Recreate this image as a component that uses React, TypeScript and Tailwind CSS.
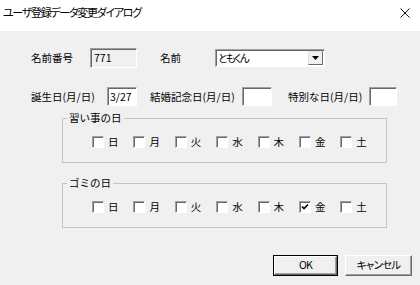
import React from "react";

const days = ["日", "月", "火", "水", "木", "金", "土"];

function Sunken({ className = "", children }: { className?: string; children?: React.ReactNode }) {
  return (
    <div
      className={`flex items-center border border-t-[#a0a0a0] border-l-[#a0a0a0] border-r-white border-b-white shadow-[inset_1px_1px_0_#696969] ${className}`}
    >
      {children}
    </div>
  );
}

function CheckBox({ checked }: { checked?: boolean }) {
  return (
    <span className="flex h-[12px] w-[12px] items-center justify-center border border-t-[#a0a0a0] border-l-[#a0a0a0] border-r-white border-b-white bg-white shadow-[inset_1px_1px_0_#696969]">
      {checked && (
        <svg width="8" height="8" viewBox="0 0 8 8">
          <path d="M1 3.5 L3 5.5 L7 1.5" fill="none" stroke="#000" strokeWidth="1.6" />
        </svg>
      )}
    </span>
  );
}

function DayGroup({ title, checked = [] }: { title: string; checked?: string[] }) {
  return (
    <fieldset className="ml-[62px] w-[325px] border border-[#c4c4c4] pb-[14px]">
      <legend className="ml-[4px] px-[2px] text-[10.5px] leading-[14px]">{title}</legend>
      <div className="flex pl-[29px] pt-[10px]">
        {days.map((d) => (
          <div key={d} className="flex w-[41.4px] items-center gap-[4px]">
            <CheckBox checked={checked.includes(d)} />
            <span className="text-[10.5px] leading-[13px]">{d}</span>
          </div>
        ))}
      </div>
    </fieldset>
  );
}

function Btn({ label, primary }: { label: string; primary?: boolean }) {
  return (
    <button
      className={`h-[21px] bg-[#f0f0f0] text-[10.5px] leading-none ${
        primary ? "w-[65px] border border-black" : "w-[67px]"
      }`}
    >
      <span className="flex h-full w-full items-center justify-center border border-t-white border-l-white border-r-[#696969] border-b-[#696969] tracking-[-0.8px] shadow-[inset_-1px_-1px_0_#a0a0a0] [font-feature-settings:'palt']">
        {label}
      </span>
    </button>
  );
}

export default function App() {
  return (
    <div className="h-[285px] w-[420px] bg-[#f0f0f0] font-['Noto_Sans_CJK_JP',sans-serif] text-black">
      <div className="flex h-[31px] items-start justify-between bg-white pl-[3px] pr-[10px] pt-[4px]">
        <span className="text-[11px] leading-[16px] tracking-[-1.3px] [font-feature-settings:'palt']">
          ユーザ登録データ変更ダイアログ
        </span>
        <svg className="mt-[4px]" width="10" height="10" viewBox="0 0 10 10">
          <path d="M0.5 0.5 L9.5 9.5 M9.5 0.5 L0.5 9.5" stroke="#111" strokeWidth="1" />
        </svg>
      </div>

      <div className="pt-[17px]">
        <div className="flex items-center pl-[31px] text-[10.5px]">
          <span className="w-[59px]">名前番号</span>
          <Sunken className="h-[20px] w-[47px] pl-[3px]">771</Sunken>
          <span className="ml-[23px] w-[55px]">名前</span>
          <Sunken className="h-[18px] w-[110px] justify-between bg-white pl-[2px] pr-[1px]">
            <span className="tracking-[-1.5px] [font-feature-settings:'palt']">ともくん</span>
            <span className="flex h-[14px] w-[15px] items-center justify-center border border-t-[#e3e3e3] border-l-[#e3e3e3] border-r-[#696969] border-b-[#696969] bg-[#f0f0f0]">
              <svg width="7" height="4" viewBox="0 0 7 4">
                <path d="M0 0 H7 L3.5 4 Z" fill="#000" />
              </svg>
            </span>
          </Sunken>
        </div>

        <div className="mt-[19px] flex items-center pl-[31px] text-[10.5px]">
          <span className="w-[76px]">誕生日(月/日)</span>
          <Sunken className="h-[19px] w-[30px] bg-white pl-[2px]">3/27</Sunken>
          <span className="ml-[13px] w-[92px]">結婚記念日(月/日)</span>
          <Sunken className="h-[19px] w-[30px] bg-white" />
          <span className="ml-[16px] w-[81px]">特別な日(月/日)</span>
          <Sunken className="h-[19px] w-[28px] bg-white" />
        </div>

        <div className="mt-[5px]">
          <DayGroup title="習い事の日" />
        </div>
        <div className="mt-[13px]">
          <DayGroup title="ゴミの日" checked={["金"]} />
        </div>

        <div className="mt-[27px] flex justify-end gap-[7px] pr-[8px]">
          <Btn label="OK" primary />
          <Btn label="キャンセル" />
        </div>
      </div>
    </div>
  );
}
